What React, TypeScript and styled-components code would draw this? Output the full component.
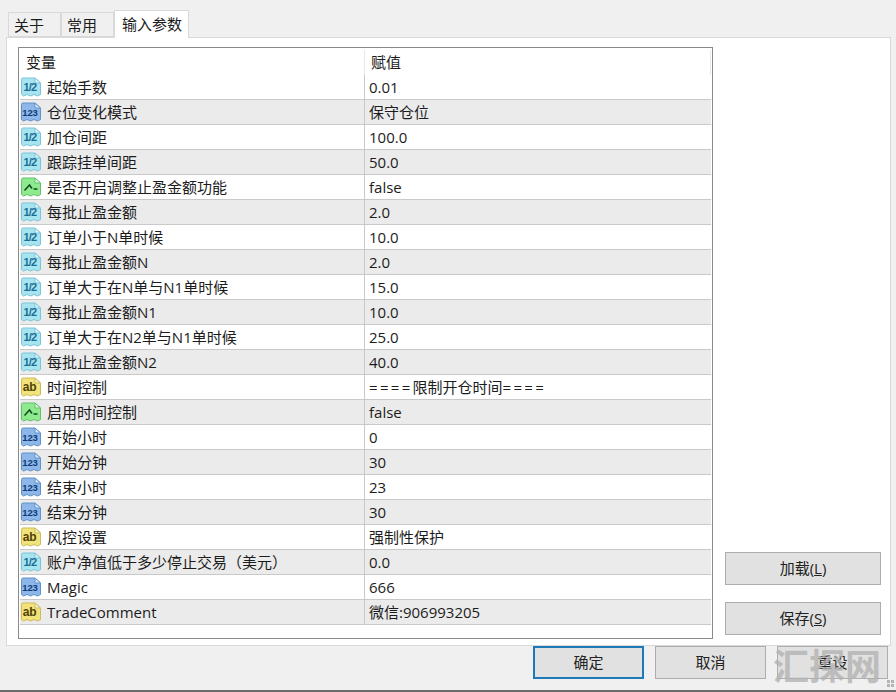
import React from "react";
import styled, { createGlobalStyle } from "styled-components";

type Kind = "frac" | "int" | "bool" | "str";

const rows: { kind: Kind; name: string; value: string }[] = [
  { kind: "frac", name: "起始手数", value: "0.01" },
  { kind: "int", name: "仓位变化模式", value: "保守仓位" },
  { kind: "frac", name: "加仓间距", value: "100.0" },
  { kind: "frac", name: "跟踪挂单间距", value: "50.0" },
  { kind: "bool", name: "是否开启调整止盈金额功能", value: "false" },
  { kind: "frac", name: "每批止盈金额", value: "2.0" },
  { kind: "frac", name: "订单小于N单时候", value: "10.0" },
  { kind: "frac", name: "每批止盈金额N", value: "2.0" },
  { kind: "frac", name: "订单大于在N单与N1单时候", value: "15.0" },
  { kind: "frac", name: "每批止盈金额N1", value: "10.0" },
  { kind: "frac", name: "订单大于在N2单与N1单时候", value: "25.0" },
  { kind: "frac", name: "每批止盈金额N2", value: "40.0" },
  { kind: "str", name: "时间控制", value: "====限制开仓时间====" },
  { kind: "bool", name: "启用时间控制", value: "false" },
  { kind: "int", name: "开始小时", value: "0" },
  { kind: "int", name: "开始分钟", value: "30" },
  { kind: "int", name: "结束小时", value: "23" },
  { kind: "int", name: "结束分钟", value: "30" },
  { kind: "str", name: "风控设置", value: "强制性保护" },
  { kind: "frac", name: "账户净值低于多少停止交易（美元）", value: "0.0" },
  { kind: "int", name: "Magic", value: "666" },
  { kind: "str", name: "TradeComment", value: "微信:906993205" },
];

const palette = {
  frac: { fill: "#a6e4f0", edge: "#7cc4d8", ink: "#1b6d96", fold: "#e6f7fb" },
  int: { fill: "#8cb7e8", edge: "#6292c8", ink: "#10397a", fold: "#dbe9f8" },
  bool: { fill: "#8eea8e", edge: "#62bf6e", ink: "#0f4f1c", fold: "#e2fae2" },
  str: { fill: "#f2e27a", edge: "#cdbb5c", ink: "#4f4106", fold: "#fbf5cf" },
};

const TypeIcon = ({ kind }: { kind: Kind }) => {
  const c = palette[kind];
  return (
    <svg width="22" height="22" viewBox="0 0 22 22">
      <path
        d="M3 2H15L20.5 7V18.5L17.5 20L14 18.5L10.5 20L7 18.5L3.5 20L1.5 18.5V3.5Q1.5 2 3 2Z"
        fill={c.fill}
        stroke={c.edge}
      />
      <path d="M15 2V7H20.5Z" fill={c.fold} stroke={c.edge} strokeLinejoin="round" />
      {kind === "bool" && (
        <path
          d="M4.5 14.5L9.5 9L12 12.5M13.5 13H17.5"
          fill="none"
          stroke={c.ink}
          strokeWidth="1.6"
        />
      )}
      {kind !== "bool" && (
        <text
          x={kind === "str" ? 9.5 : 10}
          y={kind === "str" ? 15 : 15}
          textAnchor="middle"
          fontFamily="'Liberation Sans', sans-serif"
          fontWeight="700"
          fontSize={kind === "str" ? 12 : kind === "int" ? 9.5 : 11}
          letterSpacing={kind === "frac" ? -0.8 : -0.2}
          fill={c.ink}
        >
          {kind === "frac" ? "1/2" : kind === "int" ? "123" : "ab"}
        </text>
      )}
    </svg>
  );
};

const GlobalStyle = createGlobalStyle`
  html, body {
    margin: 0;
    padding: 0;
    background: #f0f0f0;
  }
`;

const Dialog = styled.div`
  position: relative;
  width: 896px;
  height: 692px;
  box-sizing: border-box;
  padding: 10px 5px 0 6px;
  background: #f0f0f0;
  border-bottom: 2px solid #6b6b6b;
  overflow: hidden;
  font-family: "Open Sans", "Noto Sans CJK SC", sans-serif;
  font-size: 15px;
  color: #1c1c1c;
`;

const Tabs = styled.div`
  display: flex;
  height: 27px;
  padding-left: 2px;
  align-items: flex-end;
`;

const Tab = styled.div<{ $active?: boolean }>`
  box-sizing: border-box;
  width: ${(p) => (p.$active ? "75px" : "53px")};
  height: ${(p) => (p.$active ? "28px" : "25px")};
  margin-bottom: ${(p) => (p.$active ? "-1px" : "0")};
  padding-left: ${(p) => (p.$active ? "7px" : "5px")};
  line-height: ${(p) => (p.$active ? "27px" : "25px")};
  background: ${(p) => (p.$active ? "#fff" : "#f0f0f0")};
  border: 1px solid #d9d9d9;
  border-bottom: ${(p) => (p.$active ? "none" : "1px solid #d9d9d9")};
  white-space: nowrap;
  position: relative;
  z-index: ${(p) => (p.$active ? 1 : 0)};
`;

const Panel = styled.div`
  box-sizing: border-box;
  height: 609px;
  padding: 9px 9px 7px 11px;
  display: flex;
  gap: 12px;
  background: #fff;
  border: 1px solid #d9d9d9;
`;

const ListBox = styled.div`
  box-sizing: border-box;
  flex: none;
  width: 695px;
  height: 592px;
  border: 1px solid #8a8a8a;
  padding: 2px 1px 0 1px;
  overflow: hidden;
`;

const HeaderRow = styled.div`
  display: grid;
  grid-template-columns: 345px 1fr;
  height: 25px;
  line-height: 25px;
`;

const HeaderCell = styled.div`
  padding-left: 6px;
  border-right: 1px solid #e8e8e8;
`;

const Row = styled.div<{ $shaded: boolean }>`
  box-sizing: border-box;
  display: grid;
  grid-template-columns: 345px 1fr;
  height: 25px;
  background: ${(p) => (p.$shaded ? "#ebebeb" : "#fff")};
  border-bottom: 1px solid #c9c9c9;
`;

const NameCell = styled.div`
  display: flex;
  align-items: center;
  padding-bottom: 1px;
  border-right: 1px solid #c9c9c9;
  white-space: nowrap;
`;

const IconSlot = styled.span`
  display: flex;
  width: 27px;
  flex: none;
`;

const ValueCell = styled.div`
  display: flex;
  align-items: center;
  padding: 0 0 1px 4px;
  white-space: nowrap;
`;

const Equals = styled.span`
  letter-spacing: 2.3px;
`;

const Side = styled.div`
  flex: 1;
  display: flex;
  flex-direction: column;
  justify-content: flex-end;
  gap: 17px;
  padding-bottom: 3px;
`;

const Button = styled.button<{ $primary?: boolean }>`
  box-sizing: border-box;
  display: block;
  height: 33px;
  padding: 0 0 3px;
  font: inherit;
  color: #222;
  background: #e1e1e1;
  border: ${(p) => (p.$primary ? "2px solid #1f79b8" : "1px solid #adadad")};
`;

const SideButton = styled(Button)`
  width: 156px;
`;

const Footer = styled.div`
  display: flex;
  justify-content: flex-end;
  gap: 11px;
  padding-right: 3px;
`;

const FootButton = styled(Button)`
  width: 111px;
`;

const Watermark = styled.div`
  position: absolute;
  left: 773px;
  top: 644px;
  font-size: 36px;
  line-height: 46px;
  font-weight: 700;
  color: rgba(178, 178, 178, 0.8);
  pointer-events: none;
`;

const Grip = styled.svg`
  position: absolute;
  right: 1px;
  bottom: 2px;
`;

const renderValue = (value: string) =>
  value.split(/(=+)/).map((part, i) =>
    part.startsWith("=") ? <Equals key={i}>{part}</Equals> : part
  );

export default function App() {
  return (
    <>
      <GlobalStyle />
      <Dialog>
        <Tabs>
          <Tab>关于</Tab>
          <Tab>常用</Tab>
          <Tab $active>输入参数</Tab>
        </Tabs>
        <Panel>
          <ListBox>
            <HeaderRow>
              <HeaderCell>变量</HeaderCell>
              <HeaderCell>赋值</HeaderCell>
            </HeaderRow>
            {rows.map((r, i) => (
              <Row key={i} $shaded={i % 2 === 1}>
                <NameCell>
                  <IconSlot>
                    <TypeIcon kind={r.kind} />
                  </IconSlot>
                  {r.name}
                </NameCell>
                <ValueCell>{renderValue(r.value)}</ValueCell>
              </Row>
            ))}
          </ListBox>
          <Side>
            <SideButton>
              加载(<u>L</u>)
            </SideButton>
            <SideButton>
              保存(<u>S</u>)
            </SideButton>
          </Side>
        </Panel>
        <Footer>
          <FootButton $primary>确定</FootButton>
          <FootButton>取消</FootButton>
          <FootButton>重设</FootButton>
        </Footer>
        <Watermark>汇探网</Watermark>
        <Grip width="9" height="9" viewBox="0 0 9 9">
          <path d="M1 5h3v3H1zM5 5h3v3H5zM5 1h3v3H5zM1 1h3v3H1z" fill="#b5b5b5" />
        </Grip>
      </Dialog>
    </>
  );
}
